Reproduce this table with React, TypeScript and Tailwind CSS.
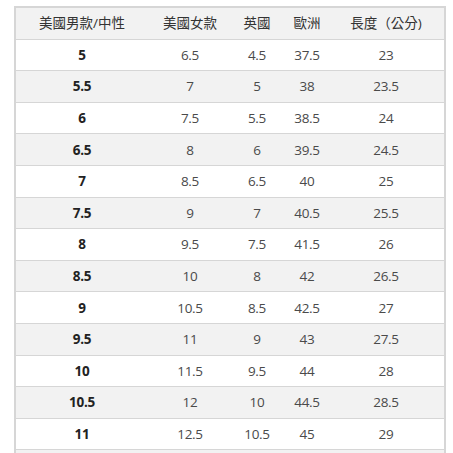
import React from 'react';

const rows: [string, string, string, string, string][] = [
  ['5', '6.5', '4.5', '37.5', '23'],
  ['5.5', '7', '5', '38', '23.5'],
  ['6', '7.5', '5.5', '38.5', '24'],
  ['6.5', '8', '6', '39.5', '24.5'],
  ['7', '8.5', '6.5', '40', '25'],
  ['7.5', '9', '7', '40.5', '25.5'],
  ['8', '9.5', '7.5', '41.5', '26'],
  ['8.5', '10', '8', '42', '26.5'],
  ['9', '10.5', '8.5', '42.5', '27'],
  ['9.5', '11', '9', '43', '27.5'],
  ['10', '11.5', '9.5', '44', '28'],
  ['10.5', '12', '10', '44.5', '28.5'],
  ['11', '12.5', '10.5', '45', '29'],
];

const headers = ['美國男款/中性', '美國女款', '英國', '歐洲', '長度（公分)'];

const gridCols = 'grid grid-cols-[132px_84px_50px_50px_1fr]';

const App: React.FC = () => {
  return (
    <div className="min-h-screen bg-white pt-[6px] pl-[14px] font-['Open_Sans','Noto_Sans_CJK_TC',sans-serif]">
      <div className="w-[432px] border-x-2 border-t-2 border-[#d6d6d6]">
        {/* header */}
        <div className={`${gridCols} h-[31.6px] items-center bg-[#f2f2f2] border-b-[1.5px] border-[#d6d6d6] text-[13.5px] text-[#333]`}>
          {headers.map((h, i) => (
            <div key={i} className={`text-center ${i === 4 ? 'pr-[4px]' : ''}`}>{h}</div>
          ))}
        </div>
        {rows.map((r, ri) => (
          <div
            key={ri}
            className={`${gridCols} h-[31.6px] items-center border-b-[1.5px] border-[#d6d6d6] text-[13.5px] ${ri % 2 === 1 ? 'bg-[#f2f2f2]' : 'bg-white'}`}
          >
            {r.map((v, ci) => (
              <div
                key={ci}
                className={`text-center tracking-[-0.3px] ${ci === 0 ? 'font-bold text-[#222]' : 'text-[#4a4a4a]'} ${ci === 4 ? 'pr-[4px]' : ''}`}
              >
                {v}
              </div>
            ))}
          </div>
        ))}
        {/* next row, cut off by the frame */}
        <div className="h-[12px] bg-[#f2f2f2]" />
      </div>
    </div>
  );
};

export default App;
